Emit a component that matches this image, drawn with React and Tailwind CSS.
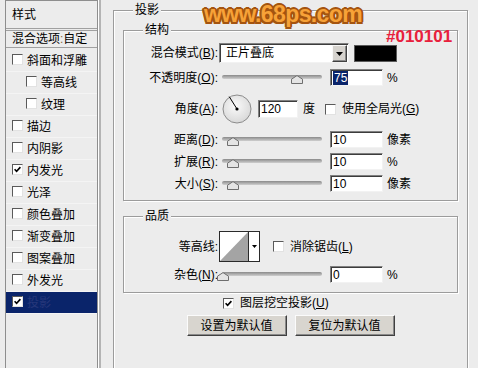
import React from "react";

const FONT = "[font-family:Liberation_Sans,Noto_Sans_CJK_SC,sans-serif]";

function Check({ checked, className = "" }) {
  return (
    <span
      className={`inline-flex shrink-0 w-[11px] h-[11px] items-center justify-center bg-white border border-t-[#5a5a5a] border-l-[#5a5a5a] border-r-[#e2e2e2] border-b-[#e2e2e2] ${className}`}
    >
      {checked && (
        <svg width="7" height="7" viewBox="0 0 7 7">
          <path d="M0.6 3.2 L2.6 5.3 L6.4 1.1" fill="none" stroke="#000" strokeWidth="1.6" />
        </svg>
      )}
    </span>
  );
}

function U({ children }) {
  return <span className="underline underline-offset-[1px]">{children}</span>;
}

function Label({ children }) {
  return <div className="w-[94px] shrink-0 text-right leading-[16px] whitespace-nowrap">{children}</div>;
}

function Slider({ pos }) {
  return (
    <div className="relative w-[100px] h-[17px] ml-[4px] shrink-0">
      <div className="mt-[6px] h-[4px] rounded-full bg-linear-to-b from-[#8a8a8a] to-[#cfcfcf]" />
      <svg className="absolute top-[6px]" style={{ left: pos - 6 }} width="12" height="9" viewBox="0 0 12 9">
        <path d="M0.5 8.5 V4.2 L6 0.6 L11.5 4.2 V8.5 Z" fill="#e4e4e4" stroke="#6e6e6e" />
      </svg>
    </div>
  );
}

function Field({ value, selected, className = "" }) {
  return (
    <div
      className={`shrink-0 h-[17px] bg-white border border-t-[#808080] border-l-[#808080] border-r-[#f2f2f2] border-b-[#f2f2f2] shadow-[inset_1px_1px_0_#3c3c3c] flex items-center pl-[2px] leading-[14px] ${className}`}
    >
      {selected ? <span className="bg-[#0a246a] text-white h-[14px] px-[1px]">{value}</span> : <span>{value}</span>}
    </div>
  );
}

function Dial() {
  return (
    <svg className="ml-[4px] shrink-0" width="30" height="30" viewBox="0 0 30 30">
      <defs>
        <radialGradient id="dg" cx="0.45" cy="0.4" r="0.65">
          <stop offset="0" stopColor="#fafafa" />
          <stop offset="1" stopColor="#d6d6d6" />
        </radialGradient>
      </defs>
      <circle cx="15" cy="15" r="14" fill="url(#dg)" stroke="#8c8c8c" />
      <line x1="15" y1="15" x2="7.2" y2="2.6" stroke="#000" strokeWidth="1" />
      <circle cx="15" cy="15" r="1.6" fill="#000" />
    </svg>
  );
}

function Btn({ children }) {
  return (
    <div className="w-[100px] h-[21px] flex items-center justify-center bg-[#d8d5cf] border border-t-[#fbfbfb] border-l-[#fbfbfb] border-r-[#404040] border-b-[#404040] shadow-[inset_-1px_-1px_0_#8a8a8a] leading-[16px]">
      {children}
    </div>
  );
}

const items = [
  { t: "斜面和浮雕" },
  { t: "等高线", l: 2 },
  { t: "纹理", l: 2 },
  { t: "描边" },
  { t: "内阴影" },
  { t: "内发光", c: true },
  { t: "光泽" },
  { t: "颜色叠加" },
  { t: "渐变叠加" },
  { t: "图案叠加" },
  { t: "外发光" },
  { t: "投影", c: true, sel: true },
];

export default function App() {
  return (
    <div className={`relative w-[478px] h-[368px] overflow-hidden bg-[#ececec] flex items-start text-[12px] text-black ${FONT}`}>
      {/* Left styles list */}
      <div className="ml-[5px] w-[93px] h-[380px] shrink-0 border border-[#8e8e8e] shadow-[1px_0_0_#fff,3px_0_0_#b4b4b4] flex flex-col">
        <div className="h-[28px] border-b border-[#a0a0a0] flex items-center pl-[6px] leading-[16px]">样式</div>
        <div className="mt-[1px] h-[18px] border-t border-b border-[#a0a0a0] flex items-center pl-[6px] leading-[16px] whitespace-nowrap">
          混合选项<span className="text-[#8a6a3a]">:</span>自定
        </div>
        <div className="pt-[2px] flex flex-col">
          {items.map((it, i) => (
            <div
              key={i}
              className={`flex items-center h-[22px] border-b border-[#f4f4f4] ${it.l === 2 ? "pl-[20px]" : "pl-[6px]"} ${it.sel ? "bg-[#0a246a] text-[#26377a]" : ""}`}
            >
              <Check checked={it.c} className="mb-[3px]" />
              <span className="ml-[4px] leading-[16px] whitespace-nowrap">{it.t}</span>
            </div>
          ))}
        </div>
      </div>

      {/* Right: drop shadow group */}
      <fieldset className="ml-[15px] mt-[2px] w-[355px] h-[400px] shrink-0 border border-[#9c9c9c] shadow-[inset_1px_1px_0_#fff,1px_1px_0_#fff] px-[9px]">
        <legend className="ml-[10px] px-[2px] leading-[16px] bg-[#ececec]">投影</legend>

        <fieldset className="mt-[4px] w-[335px] border border-[#9c9c9c] shadow-[inset_1px_1px_0_#fff,1px_1px_0_#fff] pb-[8px] flex flex-col">
          <legend className="ml-[19px] px-[2px] leading-[16px] bg-[#ececec]">结构</legend>

          <div className="mt-[5px] h-[20px] flex items-center">
            <Label>
              混合模式(<U>B</U>):
            </Label>
            <div className="ml-[1px] w-[130px] h-[20px] shrink-0 bg-white border border-t-[#808080] border-l-[#808080] border-r-[#f2f2f2] border-b-[#f2f2f2] shadow-[inset_1px_1px_0_#3c3c3c] flex items-center">
              <span className="pl-[6px] flex-1 leading-[16px]">正片叠底</span>
              <div className="mr-[1px] w-[15px] h-[17px] mt-[1px] bg-[#d6d3ce] border border-t-[#f8f8f8] border-l-[#f8f8f8] border-r-[#404040] border-b-[#404040] shadow-[inset_-1px_-1px_0_#8a8a8a] flex items-center justify-center">
                <svg width="7" height="4" viewBox="0 0 7 4">
                  <path d="M0 0 H7 L3.5 4 Z" fill="#000" />
                </svg>
              </div>
            </div>
            <div className="ml-[5px] w-[43px] h-[17px] shrink-0 bg-black border border-[#5a5a5a]" />
          </div>

          <div className="mt-[6px] h-[17px] flex items-center">
            <Label>
              不透明度(<U>O</U>):
            </Label>
            <Slider pos={75} />
            <Field value="75" selected className="ml-[8px] w-[53px]" />
            <span className="ml-[4px] leading-[16px]">%</span>
          </div>

          <div className="mt-[8px] h-[30px] flex items-center">
            <Label>
              角度(<U>A</U>):
            </Label>
            <Dial />
            <Field value="120" className="ml-[6px] w-[40px] h-[18px]" />
            <span className="ml-[5px] leading-[16px]">度</span>
            <Check className="ml-[10px]" />
            <span className="ml-[6px] leading-[16px] whitespace-nowrap">
              使用全局光(<U>G</U>)
            </span>
          </div>

          <div className="mt-[7px] h-[17px] flex items-center">
            <Label>
              距离(<U>D</U>):
            </Label>
            <Slider pos={11} />
            <Field value="10" className="ml-[8px] w-[53px]" />
            <span className="ml-[4px] leading-[16px]">像素</span>
          </div>

          <div className="mt-[5px] h-[17px] flex items-center">
            <Label>
              扩展(<U>R</U>):
            </Label>
            <Slider pos={11} />
            <Field value="10" className="ml-[8px] w-[53px]" />
            <span className="ml-[4px] leading-[16px]">%</span>
          </div>

          <div className="mt-[5px] h-[17px] flex items-center">
            <Label>
              大小(<U>S</U>):
            </Label>
            <Slider pos={11} />
            <Field value="10" className="ml-[8px] w-[53px]" />
            <span className="ml-[4px] leading-[16px]">像素</span>
          </div>
        </fieldset>

        <fieldset className="mt-[7px] w-[335px] border border-[#9c9c9c] shadow-[inset_1px_1px_0_#fff,1px_1px_0_#fff] pb-[9px] flex flex-col">
          <legend className="ml-[19px] px-[2px] leading-[16px] bg-[#ececec]">品质</legend>

          <div className="mt-[7px] h-[31px] flex items-center">
            <Label>等高线:</Label>
            <div className="ml-[1px] w-[41px] h-[31px] shrink-0 flex border border-[#2a2a2a] bg-white">
              <svg width="28" height="29" viewBox="0 0 28 29" className="shrink-0">
                <path d="M0 29 L28 0 V29 Z" fill="#a4a4a4" />
              </svg>
              <div className="flex-1 border-l border-[#2a2a2a] flex items-center justify-center">
                <svg width="5" height="3" viewBox="0 0 5 3">
                  <path d="M0 0 H5 L2.5 3 Z" fill="#000" />
                </svg>
              </div>
            </div>
            <Check className="ml-[13px]" />
            <span className="ml-[6px] leading-[16px] whitespace-nowrap">
              消除锯齿(<U>L</U>)
            </span>
          </div>

          <div className="mt-[4px] h-[17px] flex items-center">
            <Label>
              杂色(<U>N</U>):
            </Label>
            <Slider pos={1} />
            <Field value="0" className="ml-[8px] w-[53px]" />
            <span className="ml-[4px] leading-[16px]">%</span>
          </div>
        </fieldset>

        <div className="mt-[2px] h-[16px] flex items-center pl-[100px]">
          <Check checked />
          <span className="ml-[6px] leading-[16px] whitespace-nowrap">
            图层挖空投影(<U>U</U>)
          </span>
        </div>

        <div className="mt-[4px] flex justify-center gap-[8px]">
          <Btn>设置为默认值</Btn>
          <Btn>复位为默认值</Btn>
        </div>
      </fieldset>

      {/* Watermark & annotation */}
      <div className="absolute left-[204px] top-[3px] text-[23px] leading-[23px] font-bold tracking-[-0.6px] text-[#f7a238] [font-family:Liberation_Sans,sans-serif] [text-shadow:2px_0_#a4540f,-2px_0_#a4540f,0_2px_#a4540f,0_-2px_#a4540f,1.5px_1.5px_#a4540f,-1.5px_-1.5px_#a4540f,1.5px_-1.5px_#a4540f,-1.5px_1.5px_#a4540f]">
        www.68ps.com
      </div>
      <div className="absolute left-[386px] top-[28px] text-[17px] leading-[18px] font-bold text-[#e8203c] [font-family:Liberation_Sans,sans-serif]">
        #010101
      </div>
    </div>
  );
}
